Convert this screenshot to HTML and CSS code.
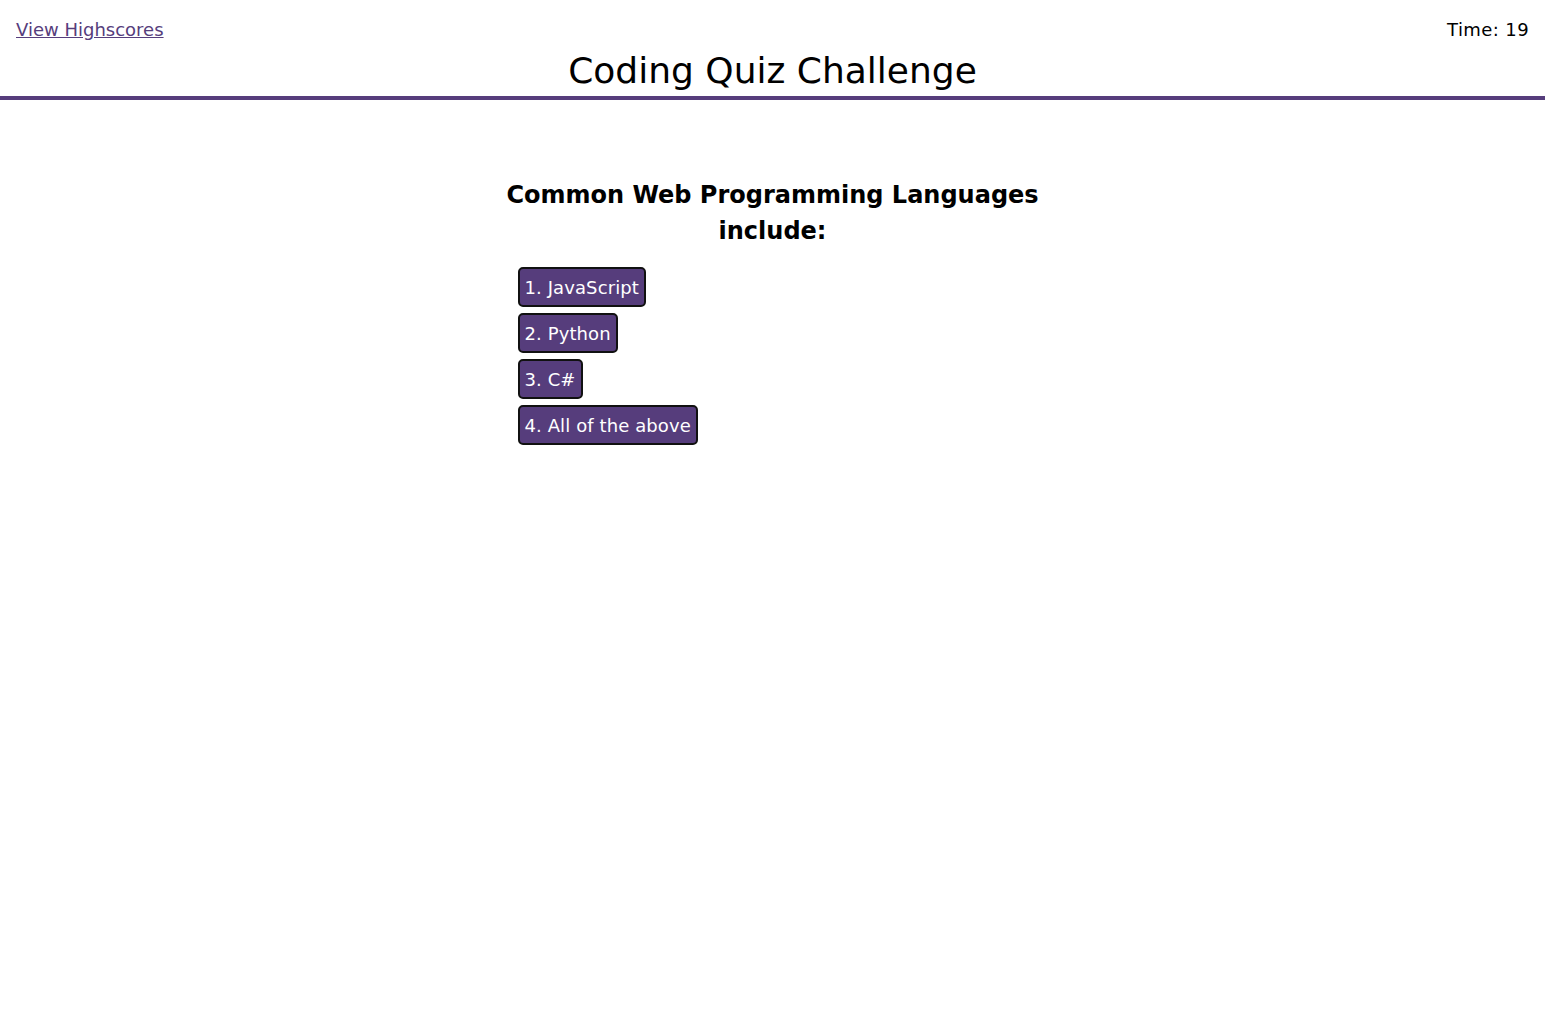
FILE: index.html
```html
<!DOCTYPE html>
<html lang="en">
<head>
<meta charset="utf-8">
<title>Coding Quiz Challenge</title>
<link rel="stylesheet" href="styles.css">
</head>
<body>
<header class="site-header">
  <div class="top-row">
    <a class="highscores-link" href="#">View Highscores</a>
    <span class="timer">Time: 19</span>
  </div>
  <h1 class="title">Coding Quiz Challenge</h1>
</header>
<main class="quiz">
  <section class="question-box">
    <h2 class="question">Common Web Programming Languages include:</h2>
    <div class="choices">
      <button class="choice">1. JavaScript</button>
      <button class="choice">2. Python</button>
      <button class="choice">3. C#</button>
      <button class="choice">4. All of the above</button>
    </div>
  </section>
</main>
</body>
</html>
```
FILE: styles.css
```css
* { box-sizing: border-box; }
html, body { margin: 0; padding: 0; background: #fff; }
body {
  font-family: "DejaVu Sans", Verdana, sans-serif;
  color: #000;
}
.site-header {
  border-bottom: 4px solid #563d7c;
}
.top-row {
  display: flex;
  justify-content: space-between;
  align-items: center;
  padding: 19px 16px 0 16px;
  font-size: 18px;
  line-height: 22px;
}
.highscores-link {
  color: #563d7c;
  text-decoration: underline;
}
.timer { color: #000; letter-spacing: 0.4px; }
.title {
  margin: 4px 0 0 0;
  text-align: center;
  font-weight: normal;
  font-size: 36px;
  line-height: 51px;
}
.quiz {
  display: flex;
  justify-content: center;
  padding-top: 77px;
}
.question-box {
  width: 560px;
}
.question {
  margin: 0 0 18px 0;
  text-align: center;
  font-size: 24px;
  line-height: 36px;
  font-weight: bold;
}
.choices {
  display: flex;
  flex-direction: column;
  align-items: flex-start;
  gap: 6px;
  padding-left: 25px;
}
.choice {
  font-family: "DejaVu Sans", Verdana, sans-serif;
  font-size: 18px;
  line-height: 22px;
  letter-spacing: 0.1px;
  color: #fff;
  background: #563d7c;
  border: 2px solid #111;
  border-radius: 5px;
  padding: 8px 5px 6px 5px;
  cursor: pointer;
}
```
